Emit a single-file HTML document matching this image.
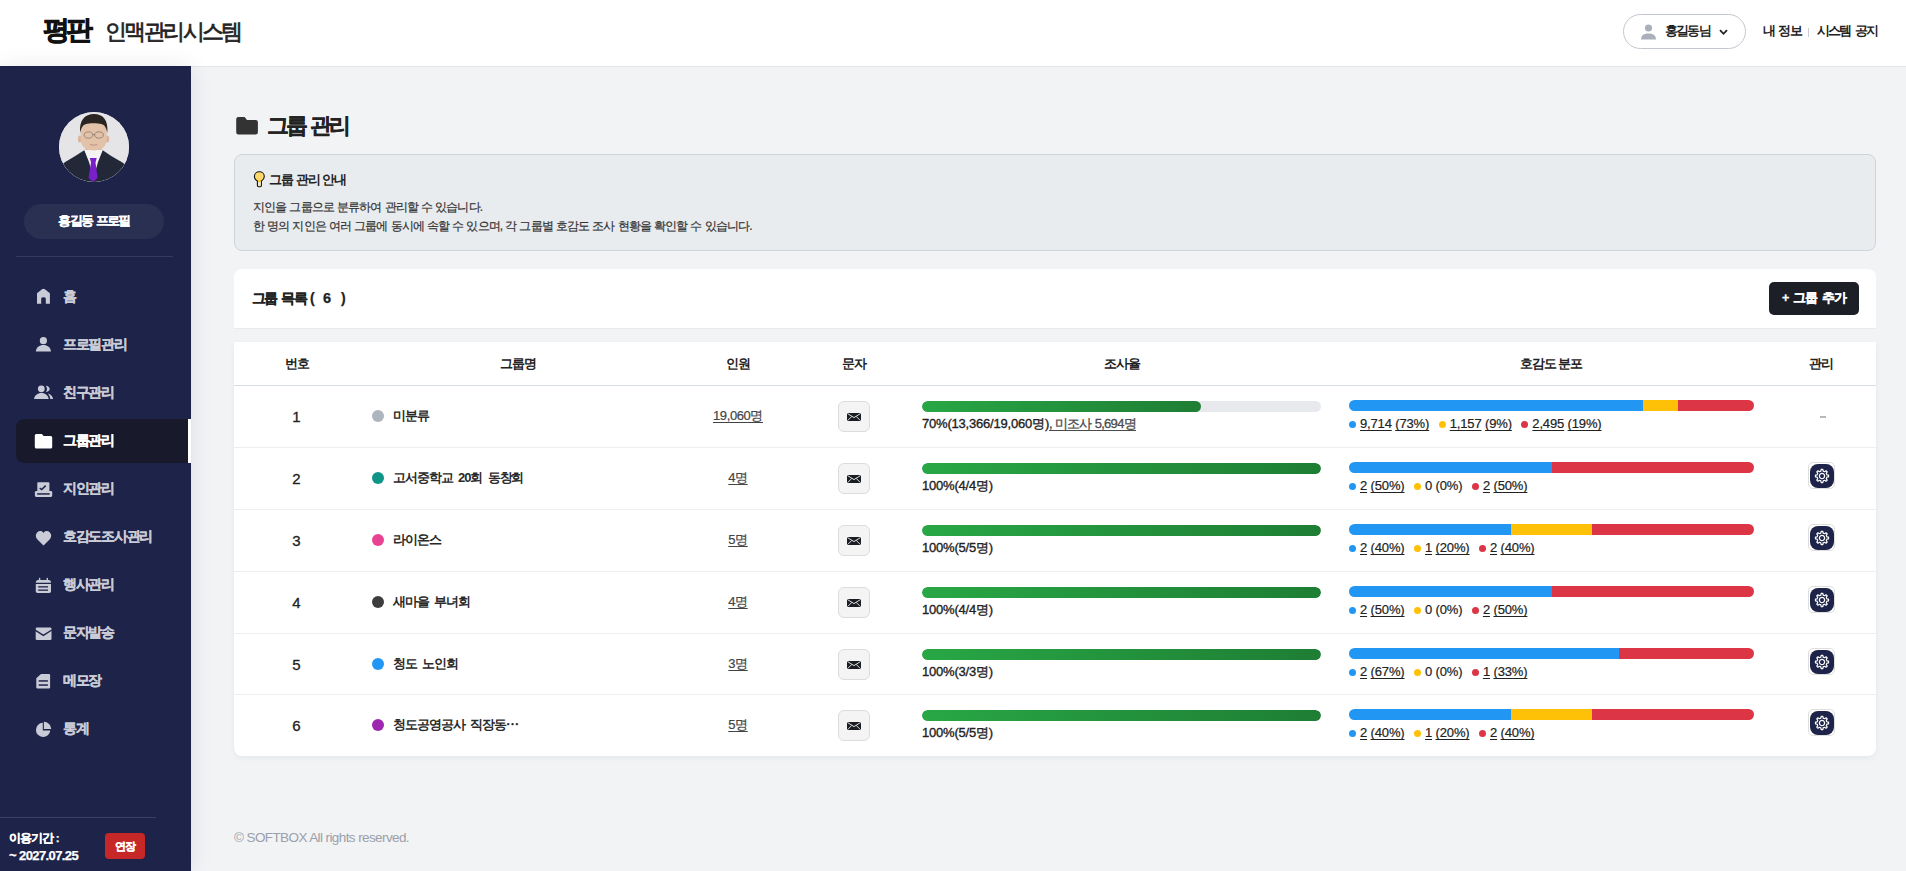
<!DOCTYPE html>
<html lang="ko">
<head>
<meta charset="utf-8">
<title>그룹 관리</title>
<style>
*{box-sizing:border-box;margin:0;padding:0}
.sb7,.mi,.ppill,.lhead .t,.addbtn,.term,.term2,.ext{-webkit-text-stroke:.25px currentColor}
.logo2{-webkit-text-stroke:.7px currentColor}
.logo1{-webkit-text-stroke:.7px currentColor}
.info p{-webkit-text-stroke:.2px currentColor}
html,body{width:1906px;height:871px;overflow:hidden}
body{font-family:"Liberation Sans",sans-serif;background:#f2f3f5;color:#222;position:relative}
.abs{position:absolute}
/* header */
#hdr{position:absolute;left:0;top:0;width:1906px;height:67px;background:#fff;border-bottom:1px solid #e4e7eb;z-index:1}
.logo1{position:absolute;left:43px;top:12px;font-size:27px;font-weight:700;letter-spacing:-4px;color:#111;line-height:36px;white-space:nowrap}
.logo2{position:absolute;left:105px;top:17px;font-size:22px;font-weight:400;letter-spacing:-2.6px;color:#222;line-height:30px;white-space:nowrap}
.upill{position:absolute;left:1623px;top:14px;width:123px;height:35px;border:1px solid #c3c8d0;border-radius:18px}
.hlink{position:absolute;top:23px;font-size:12.5px;font-weight:700;color:#222;letter-spacing:-1.8px;word-spacing:2.5px;line-height:16px;white-space:nowrap}
/* sidebar */
#sb{position:absolute;left:0;top:67px;width:191px;height:804px;background:#1e2449;box-shadow:0 0 22px rgba(20,25,50,.09);z-index:2}
.avatar{position:absolute;left:59px;top:45px;width:70px;height:70px;border-radius:50%;overflow:hidden;background:#e3e4e8}
.ppill{position:absolute;left:24px;top:137px;width:140px;height:35px;border-radius:18px;background:#2a3052;color:#fff;font-size:12.5px;font-weight:700;text-align:center;line-height:35px;letter-spacing:-1.9px;word-spacing:3px}
.sdiv{position:absolute;left:16px;top:189px;width:157px;height:1px;background:#353b5c}
.mi{position:absolute;left:16px;width:175px;height:44px;color:#c9cbd6;font-size:14px;font-weight:700;letter-spacing:-1.3px;line-height:42px;padding-left:47px;white-space:nowrap}
.mi svg{position:absolute;left:18px;top:14px;width:18px;height:16px}
.mi.act{background:#181a2b;color:#fff;border-radius:8px 0 0 8px;border-right:3px solid #fff}
.bdiv{position:absolute;left:0;top:750px;width:156px;height:1px;background:#3a4062}
.term{position:absolute;left:9px;top:762px;color:#fff;font-size:11.5px;font-weight:700;line-height:18px;letter-spacing:-.8px;white-space:nowrap}
.term2{position:absolute;left:9px;top:780px;color:#fff;font-size:13px;font-weight:700;line-height:18px;letter-spacing:-.6px;white-space:nowrap}
.ext{position:absolute;left:105px;top:766px;width:40px;height:26px;background:#c62828;border-radius:4px;color:#fff;font-size:11px;font-weight:700;text-align:center;line-height:26px;letter-spacing:-1px}
/* main */
.ptitle{position:absolute;left:267px;top:111px;font-size:22px;font-weight:700;letter-spacing:-3.4px;word-spacing:3.5px;-webkit-text-stroke:.2px #222;line-height:30px;color:#222;white-space:nowrap}
.info{position:absolute;left:234px;top:154px;width:1642px;height:97px;background:#e9ecef;border:1px solid #ced4da;border-radius:8px}
.info h4{position:absolute;left:34px;top:16px;font-size:13px;font-weight:700;letter-spacing:-1px;line-height:18px;white-space:nowrap}
.info p{position:absolute;left:18px;font-size:12px;letter-spacing:-.85px;word-spacing:.5px;line-height:18px;color:#333;white-space:nowrap}
.lhead{position:absolute;left:234px;top:269px;width:1642px;height:60px;background:#fff;border-radius:8px 8px 0 0;border-bottom:1px solid #e8eaee}
.lhead .t{position:absolute;left:18px;top:20px;font-size:14px;font-weight:700;letter-spacing:-1px;line-height:18px;white-space:nowrap}
.addbtn{position:absolute;left:1535px;top:13px;width:90px;height:33px;background:#1c1f26;border-radius:5px;color:#fff;font-size:12.5px;font-weight:700;line-height:33px;text-align:center;letter-spacing:-.9px;word-spacing:2px;white-space:nowrap}
.tcard{position:absolute;left:234px;top:342px;width:1642px;height:414px;background:#fff;border-radius:0 0 8px 8px;box-shadow:0 2px 6px rgba(0,0,0,.05)}
.th{position:absolute;top:0;height:44px;line-height:44px;font-size:13px;font-weight:700;text-align:center;letter-spacing:-1px;white-space:nowrap}
.hline{position:absolute;left:0;top:43px;width:1642px;height:1px;background:#d9dee6}
.row{position:absolute;left:0;width:1642px;border-bottom:1px solid #eceef1}
.row:last-child{border-bottom:none}
.c{position:absolute}
.num{left:0;width:125px;text-align:center;top:22px;font-size:15px;line-height:18px;color:#222;-webkit-text-stroke:.3px #222}
.gdot{left:138px;top:24px;width:12px;height:12px;border-radius:50%}
.gname{left:159px;top:21px;font-size:13px;word-spacing:3px;font-weight:700;letter-spacing:-1.1px;line-height:18px;white-space:nowrap;color:#2a2a2a}
.cnt{left:442px;width:124px;text-align:center;top:22px;font-size:13px;line-height:16px;text-decoration:underline;text-underline-offset:2px;color:#444;letter-spacing:-.4px;-webkit-text-stroke:.2px #444;white-space:nowrap}
.mail{left:604px;top:15px;width:32px;height:31px;background:#f4f4f4;border:1px solid #dcdcdc;border-radius:6px}
.mail svg{position:absolute;left:8px;top:11px}
.pbar{left:688px;top:15px;width:399px;height:10.5px;border-radius:5.5px;background:#e7e9ec;overflow:hidden}
.pbar i{display:block;height:100%;border-radius:5.5px;background:linear-gradient(90deg,#28a745,#1e7e34)}
.ptxt{left:688px;top:30px;font-size:13px;font-weight:400;line-height:16px;color:#222;letter-spacing:-.2px;-webkit-text-stroke:.35px #222;white-space:nowrap}
.ptxt u{color:#4a4a4a;-webkit-text-stroke:.3px #4a4a4a;letter-spacing:-.7px;text-underline-offset:1.5px}
.dbar{left:1115px;top:14px;width:405px;height:11px;border-radius:5.5px;overflow:hidden;display:flex}
.dbar i{display:block;height:100%}
.dtxt{left:1115px;top:30px;font-size:13px;line-height:16px;color:#222;-webkit-text-stroke:.2px #222;white-space:nowrap;display:flex;align-items:center}
.dtxt b{display:inline-block;width:7px;height:7px;border-radius:50%;margin-right:4px}
.dtxt span{margin-right:9.5px;letter-spacing:-.15px}
.dtxt u{text-underline-offset:2px;text-decoration-skip-ink:none}
u,.cnt{text-decoration-skip-ink:none}
.gear{left:1574px;top:14px;width:27px;height:27px;border:1px solid #dedede;border-radius:5px;background:#fff}
.gear div{position:absolute;left:1px;top:1px;width:24px;height:24px;border-radius:8px;background:#1e2449}
.dash{left:1586px;width:6px;top:30px;height:2px;background:#b5b9bf}
.footer{position:absolute;left:234px;top:829px;font-size:13.5px;color:#9aa0aa;line-height:18px;letter-spacing:-.6px;white-space:nowrap}
</style>
</head>
<body>
<div id="hdr">
  <div class="logo1">평판</div>
  <div class="logo2">인맥관리시스템</div>
  <div class="upill">
    <svg class="abs" style="left:16px;top:9px" width="17" height="16" viewBox="0 0 17 16"><circle cx="8.5" cy="4" r="3.6" fill="#a9b0ba"/><path d="M1 15.5 C1 11 4.5 9.5 8.5 9.5 C12.5 9.5 16 11 16 15.5 Z" fill="#a9b0ba"/></svg>
    <div class="hlink" style="left:41px;top:8px">홍길동님</div>
    <svg class="abs" style="left:95px;top:14px" width="9" height="7" viewBox="0 0 9 7"><path d="M1 1.2 L4.5 4.8 L8 1.2" fill="none" stroke="#222" stroke-width="1.8"/></svg>
  </div>
  <div class="hlink" style="left:1763px">내 정보</div>
  <div class="abs" style="left:1808px;top:28px;width:1px;height:9px;background:#ccc"></div>
  <div class="hlink" style="left:1817px">시스템 공지</div>
</div>

<div class="abs" style="left:0;top:66px;width:191px;height:1px;background:#1e2449;z-index:2"></div>
<div id="sb">
  <div class="avatar">
    <svg width="70" height="70" viewBox="0 0 70 70">
      <rect width="70" height="70" fill="#e5e5e8"/>
      <path d="M27 32 L42 32 L43 42 L26 42 Z" fill="#d8b39a"/>
      <path d="M25 38 L44 38 L43 56 L26 56 Z" fill="#f4f4f4"/>
      <path d="M0 70 L0 56 C4 50 12 47 25.3 38.2 L30 50 L34.5 66 L39 50 L43.7 38.2 C56 47 65 50 70 56 L70 70 Z" fill="#222838"/>
      <path d="M30.8 46 L37.7 46 L36.5 50.5 L38.6 66 L34.2 70 L29.6 66 L32 50.5 Z" fill="#7a20c8"/>
      <ellipse cx="20.8" cy="27" rx="1.8" ry="3.5" fill="#d9b49c"/><ellipse cx="48.4" cy="27" rx="1.8" ry="3.5" fill="#d9b49c"/>
      <path d="M21.6 20 C21.6 12 27 9.5 34.7 9.5 C42.4 9.5 47.8 12 47.8 20 L47.5 29 C47 35 42 38.5 34.7 38.5 C27.4 38.5 22.4 35 21.9 29 Z" fill="#e3c2aa"/>
      <path d="M21.2 21 C19.8 8 26 1.9 35 1.9 C44 1.9 49.6 8 48.3 21 C47.5 17 46.5 13.5 43 12.2 C38 10.8 31 10.8 26.5 12.2 C23 13.5 22 17 21.2 21 Z" fill="#2a2522"/>
      <g fill="none" stroke="#8a7a68" stroke-width=".8"><ellipse cx="29.5" cy="23" rx="4.3" ry="3.1"/><ellipse cx="40" cy="23" rx="4.3" ry="3.1"/><path d="M33.8 22.6 L35.7 22.6"/></g>
      <path d="M31 32.5 Q34.7 33.8 38.4 32.5" fill="none" stroke="#b58a74" stroke-width=".8"/>
    </svg>
  </div>
  <div class="ppill">홍길동 프로필</div>
  <div class="sdiv"></div>

  <div class="mi" style="top:208px">홈</div>
  <div class="mi" style="top:256px">프로필관리</div>
  <div class="mi" style="top:304px">친구관리</div>
  <div class="mi act" style="top:352px">그룹관리</div>
  <div class="mi" style="top:400px">지인관리</div>
  <div class="mi" style="top:448px">호감도조사관리</div>
  <div class="mi" style="top:496px">행사관리</div>
  <div class="mi" style="top:544px">문자발송</div>
  <div class="mi" style="top:592px">메모장</div>
  <div class="mi" style="top:640px">통계</div>

  <div class="bdiv"></div>
  <div class="term" style="word-spacing:1px;letter-spacing:-1.1px">이용기간 :</div><div class="term2">~ 2027.07.25</div>
  <div class="ext">연장</div>
</div>

<svg class="abs" style="left:0;top:0;z-index:3" width="191" height="871" viewBox="0 0 191 871">
<g fill="#c9cbd6">
<path d="M37 293.2 L42 289.3 Q43.45 288.4 44.9 289.3 L49.9 293.2 L49.9 303.7 L45.8 303.7 L45.8 298.6 Q45.8 297.3 43.45 297.3 Q41.2 297.3 41.2 298.6 L41.2 303.7 L37 303.7 Z"/>
<circle cx="43.4" cy="340.7" r="3.6"/><path d="M35.8 351.4 C36.3 347.5 39.3 345.1 43.4 345.1 C47.5 345.1 50.5 347.5 51 351.4 Z"/>
<circle cx="41.3" cy="388.8" r="3.4"/><path d="M34 399.1 C34.5 395.5 37.5 393.1 41.35 393.1 C45.2 393.1 48.2 395.5 48.7 399.1 Z"/>
<path d="M45.7 385.7 C47.9 385.9 49.7 387.3 49.7 389 C49.7 390.7 47.9 391.8 45.7 392 C46.5 391.2 47 390.2 47 388.9 C47 387.6 46.5 386.5 45.7 385.7 Z"/>
<path d="M47.9 393.6 C50.6 394.3 52.7 396.3 53.1 399.1 L50.3 399.1 C50 397 49.2 395 47.9 393.6 Z"/>
<rect x="37.3" y="482.3" width="12.1" height="9" rx="0.8"/><rect x="34.9" y="490.9" width="17.3" height="6" rx="1.3"/>
<path d="M43.5 545.5 L37.2 539.3 C35.3 537.4 35.3 534.2 37.3 532.3 C39.2 530.5 42.1 530.7 43.5 533 C44.9 530.7 47.8 530.5 49.7 532.3 C51.7 534.2 51.7 537.4 49.8 539.3 Z"/>
<path d="M35.8 582.7 L35.8 581.9 Q36.2 580 38 579.9 L49 579.9 Q50.6 580 51 581.9 L51 582.7 Z"/><rect x="38.9" y="577.8" width="1.4" height="2.6" rx=".6"/><rect x="46.6" y="577.8" width="1.4" height="2.6" rx=".6"/>
<path d="M35.8 583.9 L51 583.9 L51 591.3 Q51 592.9 49.4 592.9 L37.4 592.9 Q35.8 592.9 35.8 591.3 Z"/>
<rect x="35.7" y="627.6" width="15.8" height="12.4" rx="1.3"/>
<path d="M41 674.1 L49 674.1 Q50.1 674.1 50.1 675.3 L50.1 687.3 Q50.1 688.6 48.8 688.6 L37.6 688.6 Q36.3 688.6 36.3 687.3 L36.3 678.3 Z"/>
<path d="M42.8 722.7 A7.2 7.2 0 1 0 50.3 730.6 L42.8 730.6 Z"/><path d="M43.9 721.8 A7.3 7.3 0 0 1 51.2 729.1 L43.9 729.1 Z"/>
</g>
<path d="M34.8 435.6 Q34.8 434.1 36.3 434.1 L41.9 434.1 L43.6 435.9 L50.7 435.9 Q52.2 435.9 52.2 437.4 L52.2 447.1 Q52.2 448.6 50.7 448.6 L36.3 448.6 Q34.8 448.6 34.8 447.1 Z" fill="#fff"/>
<g fill="#1e2449">
<rect x="37.2" y="493.2" width="12.5" height="1.5"/>
<rect x="38.2" y="586.2" width="9.8" height="1.3"/><rect x="38.2" y="589.5" width="9.8" height="1.3"/>
<rect x="38.7" y="680.2" width="9.2" height="1.5"/><rect x="38.7" y="684.3" width="9.2" height="1.5"/>
</g>
<path d="M39.7 488.1 L41.7 489.6 L45.7 485.6" fill="none" stroke="#1e2449" stroke-width="1.5"/>
<path d="M35.1 630.1 L43.4 635.4 L51.8 630" fill="none" stroke="#1e2449" stroke-width="1.3"/>
</svg>
<svg class="abs" style="left:0;top:0" width="300" height="160" viewBox="0 0 300 160"><path d="M236.2 119.3 Q236.2 117.1 238.4 117.1 L244.6 117.1 L247 119.9 L255.7 119.9 Q257.9 119.9 257.9 122.1 L257.9 132.3 Q257.9 134.5 255.7 134.5 L238.4 134.5 Q236.2 134.5 236.2 132.3 Z" fill="#333"/></svg>
<div class="ptitle">그룹 관리</div>

<div class="info">
  <svg class="abs" style="left:-1px;top:-1px" width="40" height="40" viewBox="234 154 40 40"><path d="M257.4 181 C255.6 179.9 254.4 178.2 254.4 176.4 C254.4 173.7 256.6 171.7 259.35 171.7 C262.1 171.7 264.3 173.7 264.3 176.4 C264.3 178.2 263.1 179.9 261.4 181 L261.4 185.6 Q261.4 186.7 260.3 186.7 L258.5 186.7 Q257.4 186.7 257.4 185.6 Z" fill="#ffd86b" stroke="#111" stroke-width="1.1"/><path d="M258.1 182 L260.7 182 L260.7 185.6 L258.1 185.6 Z" fill="#e6e6e6"/><path d="M258 180.5 L260.8 180.5 L260.8 182 L258 182 Z" fill="#ffc107"/></svg>
  <h4>그룹 관리 안내</h4>
  <p style="top:43px">지인을 그룹으로 분류하여 관리할 수 있습니다.</p>
  <p style="top:62px">한 명의 지인은 여러 그룹에 동시에 속할 수 있으며, 각 그룹별 호감도 조사 현황을 확인할 수 있습니다.</p>
</div>

<div class="lhead">
  <div class="t" style="word-spacing:3px;letter-spacing:-1.8px">그룹 목록</div><div class="t" style="left:76px">(</div><div class="t" style="left:89px;font-size:14.5px">6</div><div class="t" style="left:107px">)</div>
  <div class="addbtn">+ 그룹 추가</div>
</div>

<div class="tcard">
  <div class="th" style="left:0;width:125px">번호</div>
  <div class="th" style="left:125px;width:317px">그룹명</div>
  <div class="th" style="left:442px;width:124px">인원</div>
  <div class="th" style="left:566px;width:108px">문자</div>
  <div class="th" style="left:674px;width:428px">조사율</div>
  <div class="th" style="left:1102px;width:430px">호감도 분포</div>
  <div class="th" style="left:1532px;width:110px">관리</div>
  <div class="hline"></div>
  <div id="rows">
<div class="row" style="top:44px;height:62px">
 <div class="c num">1</div>
 <div class="c gdot" style="background:#adb5bd"></div>
 <div class="c gname">미분류</div>
 <div class="c cnt">19,060명</div>
 <div class="c mail"><svg width="14" height="8" viewBox="0 0 14 8"><rect x="0" y="0" width="14" height="8" rx="0.9" fill="#1a1d24"/><path d="M0.4 0.5 L7 4.6 L13.6 0.5 M0.6 7.6 L4.9 3.3 M13.4 7.6 L9.1 3.3" fill="none" stroke="#f4f4f4" stroke-width="0.9"/></svg></div>
 <div class="c pbar"><i style="width:70%"></i></div>
 <div class="c ptxt">70%(13,366/19,060명)<u>, 미조사 5,694명</u></div>
 <div class="c dbar"><i style="width:72.68%;background:#2196f3"></i><i style="width:8.66%;background:#ffc107"></i><i style="width:18.66%;background:#dc3545"></i></div>
 <div class="c dtxt"><b style="background:#2196f3"></b><span><u>9,714</u> <u>(73%)</u></span><b style="background:#ffc107"></b><span><u>1,157</u> <u>(9%)</u></span><b style="background:#dc3545"></b><span><u>2,495</u> <u>(19%)</u></span></div>
 <div class="c dash"></div>
</div>
<div class="row" style="top:106px;height:62px">
 <div class="c num">2</div>
 <div class="c gdot" style="background:#0f9488"></div>
 <div class="c gname">고서중학교 20회 동창회</div>
 <div class="c cnt">4명</div>
 <div class="c mail"><svg width="14" height="8" viewBox="0 0 14 8"><rect x="0" y="0" width="14" height="8" rx="0.9" fill="#1a1d24"/><path d="M0.4 0.5 L7 4.6 L13.6 0.5 M0.6 7.6 L4.9 3.3 M13.4 7.6 L9.1 3.3" fill="none" stroke="#f4f4f4" stroke-width="0.9"/></svg></div>
 <div class="c pbar"><i style="width:100%"></i></div>
 <div class="c ptxt">100%(4/4명)</div>
 <div class="c dbar"><i style="width:50%;background:#2196f3"></i><i style="width:50%;background:#dc3545"></i></div>
 <div class="c dtxt"><b style="background:#2196f3"></b><span><u>2</u> <u>(50%)</u></span><b style="background:#ffc107"></b><span>0 (0%)</span><b style="background:#dc3545"></b><span><u>2</u> <u>(50%)</u></span></div>
 <div class="c gear"><div><svg width="24" height="24" viewBox="0 0 24 24"><g transform="translate(12 12)"><path d="M4.86 -1.17 L6.55 -0.83 L6.55 0.83 L4.86 1.17 L4.26 2.61 L5.22 4.05 L4.05 5.22 L2.61 4.26 L1.17 4.86 L0.83 6.55 L-0.83 6.55 L-1.17 4.86 L-2.61 4.26 L-4.05 5.22 L-5.22 4.05 L-4.26 2.61 L-4.86 1.17 L-6.55 0.83 L-6.55 -0.83 L-4.86 -1.17 L-4.26 -2.61 L-5.22 -4.05 L-4.05 -5.22 L-2.61 -4.26 L-1.17 -4.86 L-0.83 -6.55 L0.83 -6.55 L1.17 -4.86 L2.61 -4.26 L4.05 -5.22 L5.22 -4.05 L4.26 -2.61 Z" fill="none" stroke="#fff" stroke-width="1.2" stroke-linejoin="round"/><circle r="2.6" fill="none" stroke="#fff" stroke-width="1.3"/></g></svg></div></div>
</div>
<div class="row" style="top:168px;height:62px">
 <div class="c num">3</div>
 <div class="c gdot" style="background:#e84393"></div>
 <div class="c gname">라이온스</div>
 <div class="c cnt">5명</div>
 <div class="c mail"><svg width="14" height="8" viewBox="0 0 14 8"><rect x="0" y="0" width="14" height="8" rx="0.9" fill="#1a1d24"/><path d="M0.4 0.5 L7 4.6 L13.6 0.5 M0.6 7.6 L4.9 3.3 M13.4 7.6 L9.1 3.3" fill="none" stroke="#f4f4f4" stroke-width="0.9"/></svg></div>
 <div class="c pbar"><i style="width:100%"></i></div>
 <div class="c ptxt">100%(5/5명)</div>
 <div class="c dbar"><i style="width:40%;background:#2196f3"></i><i style="width:20%;background:#ffc107"></i><i style="width:40%;background:#dc3545"></i></div>
 <div class="c dtxt"><b style="background:#2196f3"></b><span><u>2</u> <u>(40%)</u></span><b style="background:#ffc107"></b><span><u>1</u> <u>(20%)</u></span><b style="background:#dc3545"></b><span><u>2</u> <u>(40%)</u></span></div>
 <div class="c gear"><div><svg width="24" height="24" viewBox="0 0 24 24"><g transform="translate(12 12)"><path d="M4.86 -1.17 L6.55 -0.83 L6.55 0.83 L4.86 1.17 L4.26 2.61 L5.22 4.05 L4.05 5.22 L2.61 4.26 L1.17 4.86 L0.83 6.55 L-0.83 6.55 L-1.17 4.86 L-2.61 4.26 L-4.05 5.22 L-5.22 4.05 L-4.26 2.61 L-4.86 1.17 L-6.55 0.83 L-6.55 -0.83 L-4.86 -1.17 L-4.26 -2.61 L-5.22 -4.05 L-4.05 -5.22 L-2.61 -4.26 L-1.17 -4.86 L-0.83 -6.55 L0.83 -6.55 L1.17 -4.86 L2.61 -4.26 L4.05 -5.22 L5.22 -4.05 L4.26 -2.61 Z" fill="none" stroke="#fff" stroke-width="1.2" stroke-linejoin="round"/><circle r="2.6" fill="none" stroke="#fff" stroke-width="1.3"/></g></svg></div></div>
</div>
<div class="row" style="top:230px;height:62px">
 <div class="c num">4</div>
 <div class="c gdot" style="background:#3d3d3d"></div>
 <div class="c gname">새마을 부녀회</div>
 <div class="c cnt">4명</div>
 <div class="c mail"><svg width="14" height="8" viewBox="0 0 14 8"><rect x="0" y="0" width="14" height="8" rx="0.9" fill="#1a1d24"/><path d="M0.4 0.5 L7 4.6 L13.6 0.5 M0.6 7.6 L4.9 3.3 M13.4 7.6 L9.1 3.3" fill="none" stroke="#f4f4f4" stroke-width="0.9"/></svg></div>
 <div class="c pbar"><i style="width:100%"></i></div>
 <div class="c ptxt">100%(4/4명)</div>
 <div class="c dbar"><i style="width:50%;background:#2196f3"></i><i style="width:50%;background:#dc3545"></i></div>
 <div class="c dtxt"><b style="background:#2196f3"></b><span><u>2</u> <u>(50%)</u></span><b style="background:#ffc107"></b><span>0 (0%)</span><b style="background:#dc3545"></b><span><u>2</u> <u>(50%)</u></span></div>
 <div class="c gear"><div><svg width="24" height="24" viewBox="0 0 24 24"><g transform="translate(12 12)"><path d="M4.86 -1.17 L6.55 -0.83 L6.55 0.83 L4.86 1.17 L4.26 2.61 L5.22 4.05 L4.05 5.22 L2.61 4.26 L1.17 4.86 L0.83 6.55 L-0.83 6.55 L-1.17 4.86 L-2.61 4.26 L-4.05 5.22 L-5.22 4.05 L-4.26 2.61 L-4.86 1.17 L-6.55 0.83 L-6.55 -0.83 L-4.86 -1.17 L-4.26 -2.61 L-5.22 -4.05 L-4.05 -5.22 L-2.61 -4.26 L-1.17 -4.86 L-0.83 -6.55 L0.83 -6.55 L1.17 -4.86 L2.61 -4.26 L4.05 -5.22 L5.22 -4.05 L4.26 -2.61 Z" fill="none" stroke="#fff" stroke-width="1.2" stroke-linejoin="round"/><circle r="2.6" fill="none" stroke="#fff" stroke-width="1.3"/></g></svg></div></div>
</div>
<div class="row" style="top:292px;height:61px">
 <div class="c num">5</div>
 <div class="c gdot" style="background:#2196f3"></div>
 <div class="c gname">청도 노인회</div>
 <div class="c cnt">3명</div>
 <div class="c mail"><svg width="14" height="8" viewBox="0 0 14 8"><rect x="0" y="0" width="14" height="8" rx="0.9" fill="#1a1d24"/><path d="M0.4 0.5 L7 4.6 L13.6 0.5 M0.6 7.6 L4.9 3.3 M13.4 7.6 L9.1 3.3" fill="none" stroke="#f4f4f4" stroke-width="0.9"/></svg></div>
 <div class="c pbar"><i style="width:100%"></i></div>
 <div class="c ptxt">100%(3/3명)</div>
 <div class="c dbar"><i style="width:66.7%;background:#2196f3"></i><i style="width:33.3%;background:#dc3545"></i></div>
 <div class="c dtxt"><b style="background:#2196f3"></b><span><u>2</u> <u>(67%)</u></span><b style="background:#ffc107"></b><span>0 (0%)</span><b style="background:#dc3545"></b><span><u>1</u> <u>(33%)</u></span></div>
 <div class="c gear"><div><svg width="24" height="24" viewBox="0 0 24 24"><g transform="translate(12 12)"><path d="M4.86 -1.17 L6.55 -0.83 L6.55 0.83 L4.86 1.17 L4.26 2.61 L5.22 4.05 L4.05 5.22 L2.61 4.26 L1.17 4.86 L0.83 6.55 L-0.83 6.55 L-1.17 4.86 L-2.61 4.26 L-4.05 5.22 L-5.22 4.05 L-4.26 2.61 L-4.86 1.17 L-6.55 0.83 L-6.55 -0.83 L-4.86 -1.17 L-4.26 -2.61 L-5.22 -4.05 L-4.05 -5.22 L-2.61 -4.26 L-1.17 -4.86 L-0.83 -6.55 L0.83 -6.55 L1.17 -4.86 L2.61 -4.26 L4.05 -5.22 L5.22 -4.05 L4.26 -2.61 Z" fill="none" stroke="#fff" stroke-width="1.2" stroke-linejoin="round"/><circle r="2.6" fill="none" stroke="#fff" stroke-width="1.3"/></g></svg></div></div>
</div>
<div class="row" style="top:353px;height:61px">
 <div class="c num">6</div>
 <div class="c gdot" style="background:#9c27b0"></div>
 <div class="c gname">청도공영공사 직장동⋯</div>
 <div class="c cnt">5명</div>
 <div class="c mail"><svg width="14" height="8" viewBox="0 0 14 8"><rect x="0" y="0" width="14" height="8" rx="0.9" fill="#1a1d24"/><path d="M0.4 0.5 L7 4.6 L13.6 0.5 M0.6 7.6 L4.9 3.3 M13.4 7.6 L9.1 3.3" fill="none" stroke="#f4f4f4" stroke-width="0.9"/></svg></div>
 <div class="c pbar"><i style="width:100%"></i></div>
 <div class="c ptxt">100%(5/5명)</div>
 <div class="c dbar"><i style="width:40%;background:#2196f3"></i><i style="width:20%;background:#ffc107"></i><i style="width:40%;background:#dc3545"></i></div>
 <div class="c dtxt"><b style="background:#2196f3"></b><span><u>2</u> <u>(40%)</u></span><b style="background:#ffc107"></b><span><u>1</u> <u>(20%)</u></span><b style="background:#dc3545"></b><span><u>2</u> <u>(40%)</u></span></div>
 <div class="c gear"><div><svg width="24" height="24" viewBox="0 0 24 24"><g transform="translate(12 12)"><path d="M4.86 -1.17 L6.55 -0.83 L6.55 0.83 L4.86 1.17 L4.26 2.61 L5.22 4.05 L4.05 5.22 L2.61 4.26 L1.17 4.86 L0.83 6.55 L-0.83 6.55 L-1.17 4.86 L-2.61 4.26 L-4.05 5.22 L-5.22 4.05 L-4.26 2.61 L-4.86 1.17 L-6.55 0.83 L-6.55 -0.83 L-4.86 -1.17 L-4.26 -2.61 L-5.22 -4.05 L-4.05 -5.22 L-2.61 -4.26 L-1.17 -4.86 L-0.83 -6.55 L0.83 -6.55 L1.17 -4.86 L2.61 -4.26 L4.05 -5.22 L5.22 -4.05 L4.26 -2.61 Z" fill="none" stroke="#fff" stroke-width="1.2" stroke-linejoin="round"/><circle r="2.6" fill="none" stroke="#fff" stroke-width="1.3"/></g></svg></div></div>
</div>
</div>
</div>

<div class="footer">© SOFTBOX All rights reserved.</div>
</body>
</html>
